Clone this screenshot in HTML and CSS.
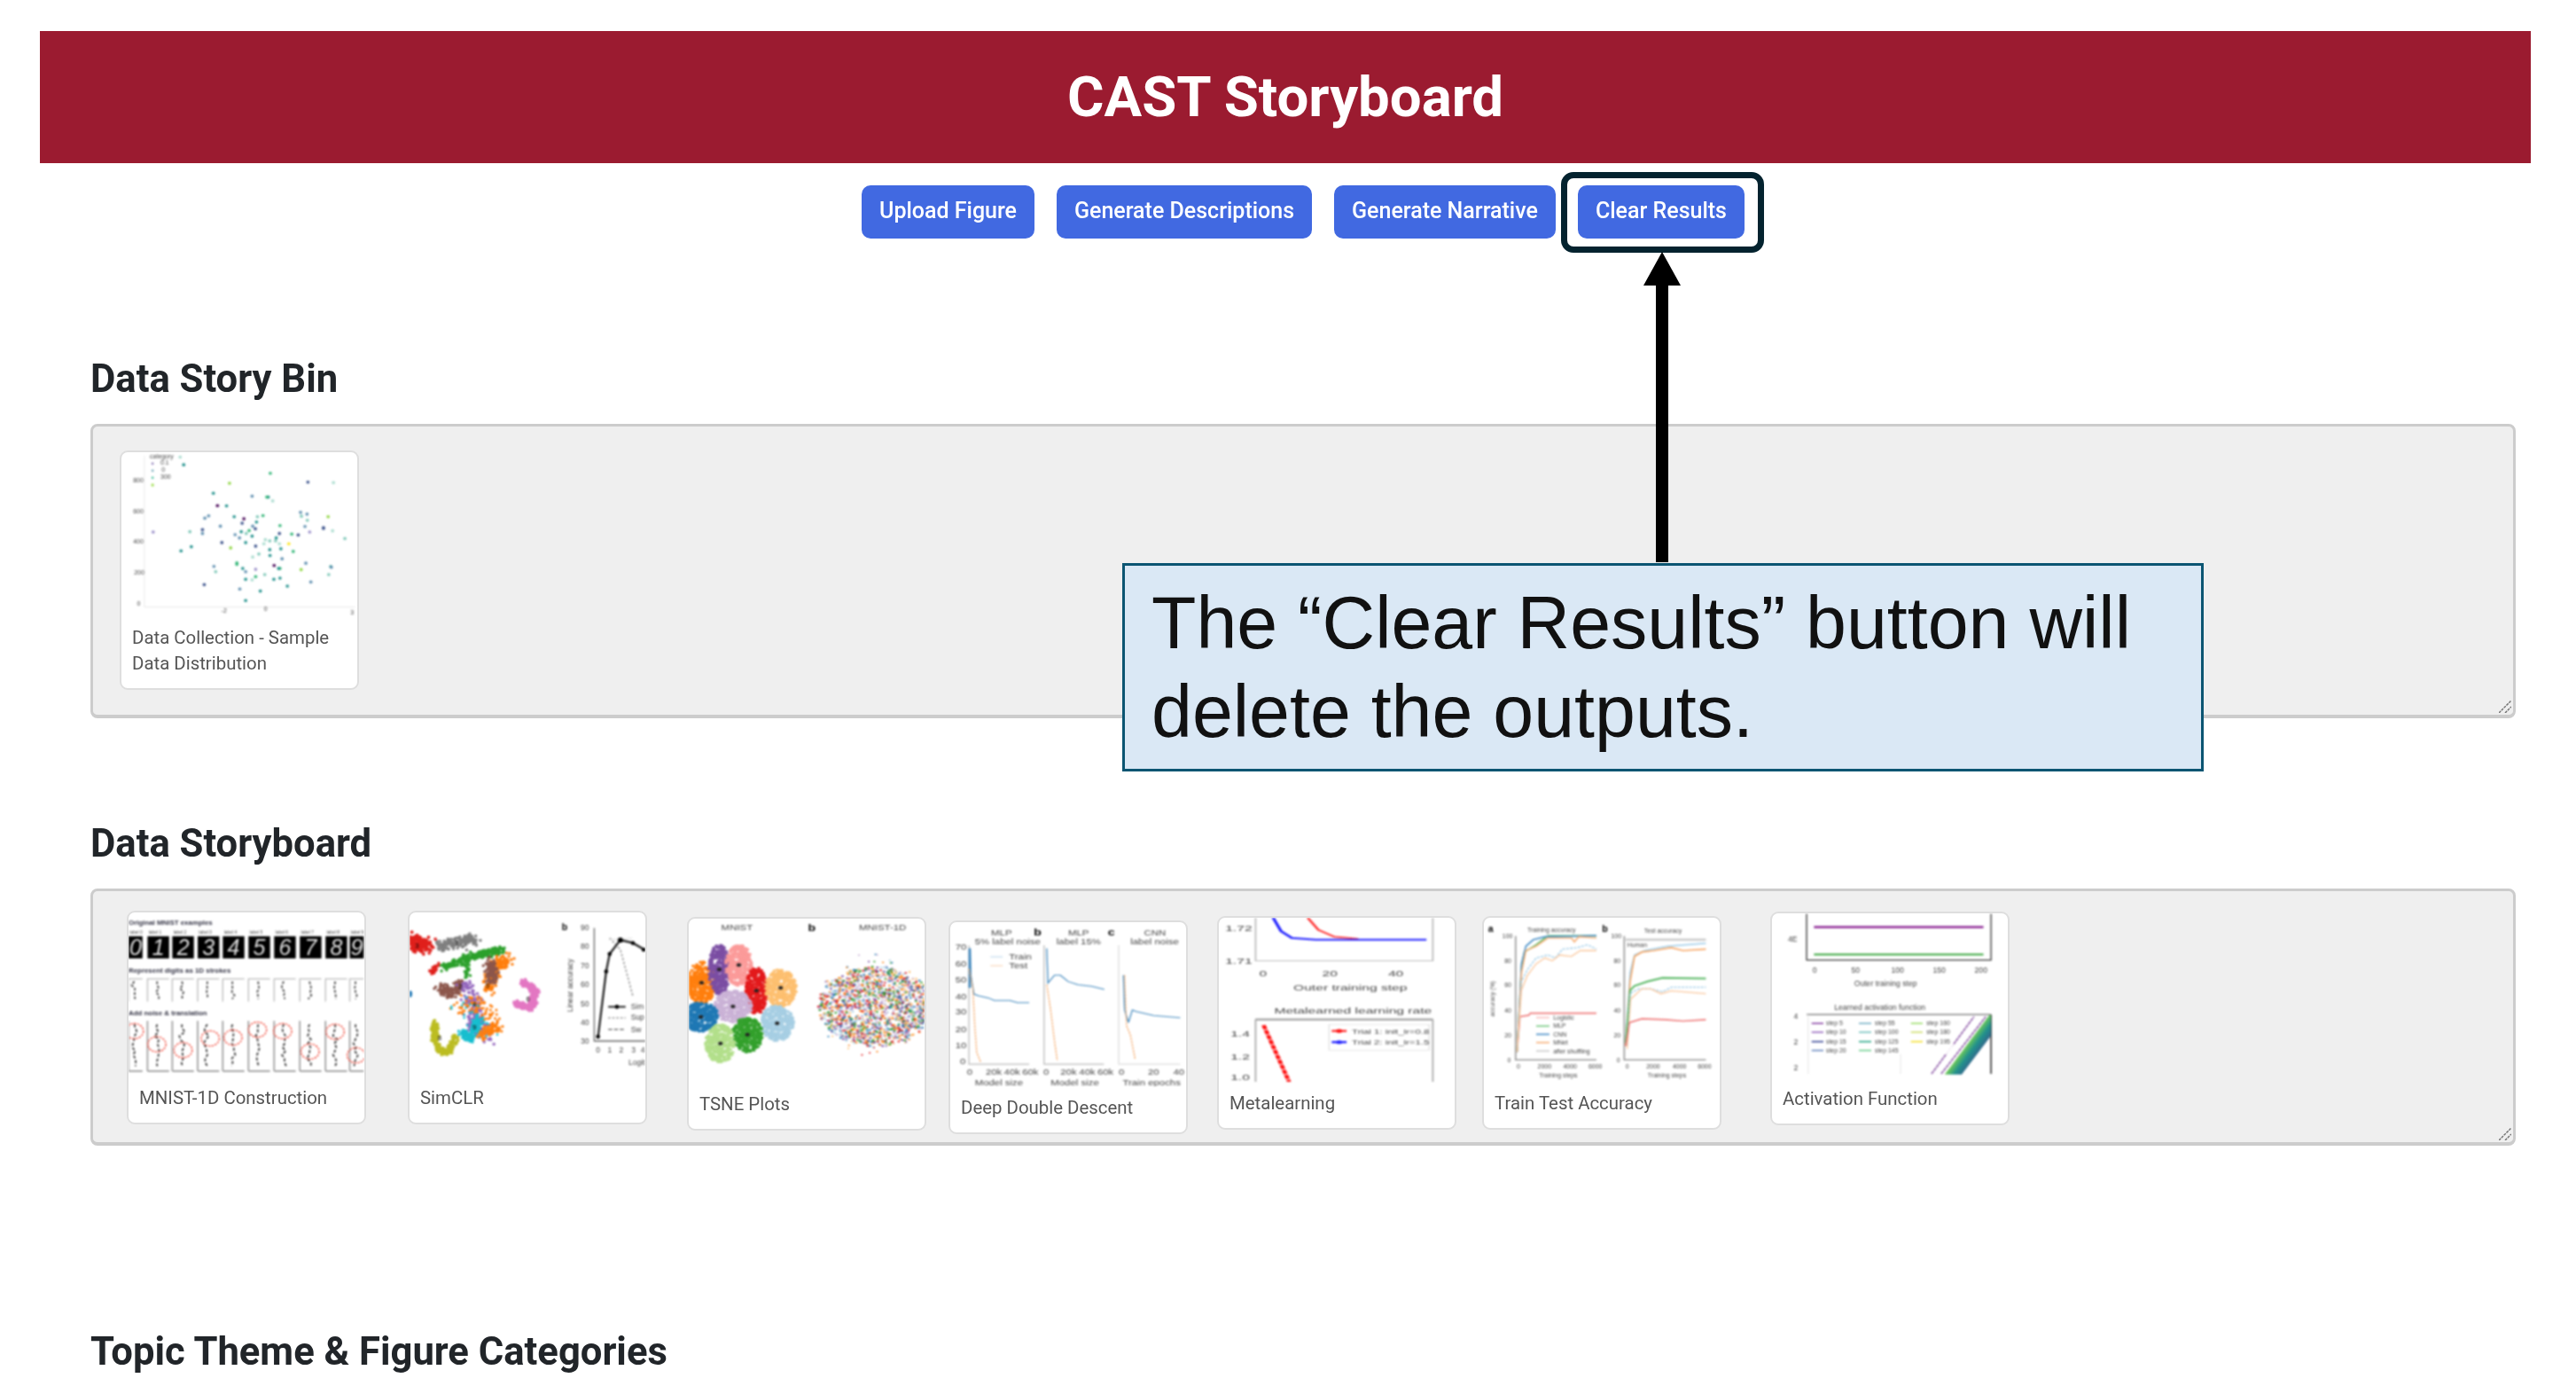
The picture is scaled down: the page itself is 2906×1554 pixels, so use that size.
FILE: index.html
```html
<!DOCTYPE html>
<html lang="en">
<head>
  <meta charset="UTF-8">
  <title>CAST Storyboard</title>
  <link rel="stylesheet" href="styles.css">
</head>
<body>
  <div class="page">
    <header class="banner"><h1>CAST Storyboard</h1></header>

    <div class="toolbar">
      <button class="btn">Upload Figure</button>
      <button class="btn">Generate Descriptions</button>
      <button class="btn">Generate Narrative</button>
      <button class="btn">Clear Results</button>
    </div>

    <h2 class="section-title title-bin">Data Story Bin</h2>
    <div class="panel panel-bin">
      <div class="card">
        <svg class="chart" viewBox="165 90 803 555">
          <g id="scatter"></g>
          <path d="M243 100V615H960" fill="none" stroke="#e8e8e8" stroke-width="3"/>
          <g class="tick">
            <text x="205" y="190">800</text><text x="205" y="296">600</text><text x="205" y="400">400</text>
            <text x="208" y="505">200</text><text x="218" y="610">0</text>
            <text x="505" y="635">-2</text><text x="650" y="630">0</text><text x="945" y="640">3</text>
            <text x="262" y="108">category</text><text x="298" y="130">0.1</text><text x="302" y="156">0</text><text x="298" y="180">300</text>
          </g>
          <g fill="#8fa">
            <circle cx="271" cy="127" r="4" fill="#8d7db8"/><circle cx="271" cy="151" r="4" fill="#6fa6b8"/>
            <circle cx="271" cy="175" r="4" fill="#3fbf9a"/><circle cx="271" cy="200" r="5" fill="#a6e05a"/>
          </g>
        </svg>
        <p class="caption">Data Collection - Sample Data Distribution</p>
      </div>
      <svg class="grip" viewBox="0 0 14 14"><path d="M0 14L14 0M7 14L14 7" stroke="#777" stroke-width="1.5" stroke-dasharray="3 1"/></svg>
    </div>

    <h2 class="section-title title-board">Data Storyboard</h2>
    <div class="panel panel-board">
      <div class="card">
        <svg class="chart" id="mnist" viewBox="10 12 808 555">
          <text class="label" x="10" y="52">Original MNIST examples</text>
          <text class="label" x="10" y="215">Represent digits as 1D strokes</text>
          <text class="label" x="10" y="360">Add noise &amp; translation</text>
        </svg>
        <p class="caption">MNIST-1D Construction</p>
      </div>

      <div class="card jog-2">
        <svg class="chart" viewBox="15 12 813 555">
          <g id="simclr"></g>
          <path d="M652 60V450H828" fill="none" stroke="#666" stroke-width="4"/>
          <path d="M705 95L742 135L765 220L785 295" fill="none" stroke="#999" stroke-width="5" stroke-dasharray="8 6"/>
          <path d="M705 100L742 100L785 95" fill="none" stroke="#ccc" stroke-width="4" stroke-dasharray="5 5"/>
          <path d="M665 435L693 210L705 150L742 102L785 112L825 135" fill="none" stroke="#222" stroke-width="7"/>
          <circle cx="665" cy="435" r="7"/><circle cx="693" cy="210" r="7"/><circle cx="705" cy="150" r="7"/>
          <circle cx="742" cy="102" r="9"/><circle cx="785" cy="112" r="7"/><circle cx="822" cy="135" r="7"/>
          <path d="M700 332H760" stroke="#222" stroke-width="6"/><circle cx="730" cy="332" r="7"/>
          <path d="M700 370H760" stroke="#aaa" stroke-width="5" stroke-dasharray="8 6"/>
          <path d="M700 410H760" stroke="#888" stroke-width="5" stroke-dasharray="14 6"/>
          <g class="tick big">
            <text x="605" y="68">90</text><text x="605" y="133">80</text><text x="605" y="198">70</text>
            <text x="605" y="265">60</text><text x="605" y="330">50</text><text x="605" y="396">40</text><text x="605" y="460">30</text>
            <text x="658" y="490">0</text><text x="698" y="490">1</text><text x="738" y="490">2</text><text x="780" y="490">3</text><text x="812" y="490">4</text>
            <text x="770" y="532">Logit</text><text x="778" y="340">Sim</text><text x="778" y="378">Sup</text><text x="778" y="418">Sw</text>
            <text x="578" y="350" transform="rotate(-90 578 350)">Linear accuracy</text>
          </g>
          <text class="letter" x="540" y="68">b</text>
        </svg>
        <p class="caption">SimCLR</p>
      </div>

      <div class="card jog-3">
        <svg class="chart" viewBox="57 108 603 555" preserveAspectRatio="none">
          <g id="tsne"></g>
          <g class="tick big">
            <text x="140" y="148">MNIST</text><text x="492" y="148">MNIST-1D</text>
          </g>
          <text class="letter" x="362" y="150">b</text>
        </svg>
        <p class="caption">TSNE Plots</p>
      </div>

      <div class="card jog-4">
        <svg class="chart" viewBox="717 122 606 520" preserveAspectRatio="none">
          <path d="M765 195V572H920M958 195V572H1112" fill="none" stroke="#bbb" stroke-width="3"/>
          <path d="M1150 195V572H1308" fill="none" stroke="#ddd" stroke-width="3"/>
          <g fill="none" stroke-width="3">
            <path d="M768 205L770 290L778 350L790 355L815 362L830 370L870 370L890 377L920 377" stroke="#3f87bd"/>
            <path d="M767 205V330" stroke="#3f87bd" stroke-width="6"/>
            <path d="M965 205L968 315L985 290L1000 290L1020 310L1045 320L1080 325L1113 335" stroke="#3f87bd"/>
            <path d="M1162 290L1165 400L1175 440L1185 400L1195 405L1240 418L1308 425" stroke="#3f87bd"/>
            <path d="M765 270L775 330L780 450L785 535L795 565" stroke="#f5a868" stroke-dasharray="7 3"/>
            <path d="M965 320L975 400L985 500L992 560" stroke="#f5a868" stroke-dasharray="7 3"/>
            <path d="M1165 290L1170 450L1180 480L1192 555" stroke="#f5a868" stroke-dasharray="7 3"/>
            <path d="M820 232H852" stroke="#d5e6f3" stroke-width="5"/>
            <path d="M820 260H852" stroke="#fbdcc2" stroke-width="4"/>
          </g>
          <g class="tick big">
            <text x="822" y="165">MLP</text><text x="780" y="192">5% label noise</text>
            <text x="1020" y="165">MLP</text><text x="990" y="192">label 15%</text>
            <text x="1215" y="165">CNN</text><text x="1180" y="192">label noise</text>
            <text x="868" y="240">Train</text><text x="868" y="268">Test</text>
            <text x="730" y="208">70</text><text x="730" y="262">60</text><text x="730" y="312">50</text><text x="730" y="366">40</text>
            <text x="730" y="414">30</text><text x="730" y="470">20</text><text x="730" y="520">10</text><text x="742" y="572">0</text>
            <text x="760" y="606">0</text><text x="808" y="606">20k</text><text x="855" y="606">40k</text><text x="902" y="606">60k</text>
            <text x="956" y="606">0</text><text x="1000" y="606">20k</text><text x="1048" y="606">40k</text><text x="1095" y="606">60k</text>
            <text x="1150" y="606">0</text><text x="1225" y="606">20</text><text x="1290" y="606">40</text>
            <text x="780" y="638">Model size</text><text x="975" y="638">Model size</text><text x="1160" y="638">Train epochs</text>
          </g>
          <text class="letter" x="932" y="165">b</text><text class="letter" x="1122" y="165">c</text>
        </svg>
        <p class="caption">Deep Double Descent</p>
      </div>

      <div class="card jog-5">
        <svg class="chart" viewBox="38 105 443 545" preserveAspectRatio="none">
          <path d="M107 105V248H440V105" fill="none" stroke="#bbb" stroke-width="3"/>
          <path d="M107 650V443H440V650" fill="none" stroke="#aaa" stroke-width="3"/>
          <path d="M107 443H440" stroke="#aaa" stroke-width="8"/>
          <path d="M205 105L225 145L255 168L300 175" fill="none" stroke="#f33" stroke-width="5"/>
          <path d="M140 105L155 150L175 172L220 178H428" fill="none" stroke="#22f" stroke-width="6"/>
          <path d="M122 462L170 650" stroke="#f11" stroke-width="8" stroke-dasharray="14 3"/>
          <rect x="245" y="460" width="188" height="85" fill="#fff" stroke="#ddd" stroke-width="2"/>
          <path d="M250 481H278" stroke="#f11" stroke-width="6"/><circle cx="264" cy="481" r="6" fill="#f11"/>
          <path d="M250 518H278" stroke="#22f" stroke-width="7"/><circle cx="264" cy="518" r="6" fill="#22f"/>
          <g class="tick big">
            <text x="50" y="148">1.72</text><text x="50" y="258">1.71</text>
            <text x="114" y="300">0</text><text x="232" y="300">20</text><text x="356" y="300">40</text>
            <text x="178" y="348">Outer training step</text><text x="142" y="424">Metalearned learning rate</text>
            <text x="60" y="500">1.4</text><text x="60" y="577">1.2</text><text x="60" y="645">1.0</text>
            <text x="288" y="490" class="small">Trial 1: init_lr=0.8</text><text x="288" y="527" class="small">Trial 2: init_lr=1.5</text>
          </g>
        </svg>
        <p class="caption">Metalearning</p>
      </div>

      <div class="card jog-6">
        <svg class="chart" viewBox="22 15 803 555">
          <path d="M130 75V497H405M500 75V497H778" fill="none" stroke="#999" stroke-width="5"/>
          <path d="M505 88H778" stroke="#ccc" stroke-width="7"/>
          <g fill="none" stroke-width="5">
            <path d="M135 470L145 350L175 345L180 338H405" stroke="#ef7b7b"/>
            <path d="M135 470L150 180L160 130L200 105L240 75H405" stroke="#58b864"/>
            <path d="M135 470L150 170L165 110L190 88L230 78L405 74" stroke="#4a90c8"/>
            <path d="M135 470L150 200L165 125L200 110L240 82H320L330 95L345 78L405 82" stroke="#f8b27a"/>
            <path d="M135 470L150 230L170 190L200 150L240 140L265 150L290 120L340 115L375 105L405 120" stroke="#9ccbe8" stroke-dasharray="9 4" stroke-width="4"/>
            <path d="M135 470L150 260L170 210L200 170L230 150L255 160L280 140L320 145L350 125L405 125" stroke="#fbc79c" stroke-width="4"/>
            <path d="M505 440L520 200L535 140L570 125L650 110L778 100" stroke="#9ccbe8"/>
            <path d="M505 450L520 230L535 145L560 130L600 125L660 115L700 125L778 120" stroke="#f8a765"/>
            <path d="M505 440L520 260L535 245L580 230L630 218L778 220" stroke="#58b864" stroke-width="6"/>
            <path d="M510 450L520 270L550 255L590 255L630 265L660 250L778 250" stroke="#9ccbe8" stroke-dasharray="9 4" stroke-width="4"/>
            <path d="M510 460L522 290L560 255L590 255L625 272L660 262L778 272" stroke="#fbc79c" stroke-width="4"/>
            <path d="M505 450L518 370L560 357L640 360L700 365L778 360" stroke="#ef7b7b"/>
            <path d="M200 353H245" stroke="#f9c2c2"/><path d="M200 382H245" stroke="#7ccc86"/>
            <path d="M200 410H245" stroke="#4a90c8"/><path d="M200 438H245" stroke="#f8b27a"/>
            <path d="M200 467H245" stroke="#ccc"/>
          </g>
          <g class="tick">
            <text x="170" y="62">Training accuracy</text><text x="568" y="64">Test accuracy</text>
            <text x="85" y="82">100</text><text x="92" y="167">80</text><text x="92" y="250">60</text><text x="92" y="337">40</text><text x="92" y="422">20</text><text x="102" y="504">0</text>
            <text x="455" y="82">100</text><text x="464" y="167">80</text><text x="464" y="250">60</text><text x="464" y="337">40</text><text x="464" y="422">20</text><text x="474" y="504">0</text>
            <text x="134" y="525">0</text><text x="205" y="525">2000</text><text x="292" y="525">4000</text><text x="378" y="525">6000</text>
            <text x="504" y="525">0</text><text x="575" y="525">2000</text><text x="665" y="525">4000</text><text x="750" y="525">6000</text>
            <text x="210" y="556">Training steps</text><text x="580" y="556">Training steps</text>
            <text x="258" y="360">Logistic</text><text x="258" y="389">MLP</text><text x="258" y="417">CNN</text><text x="258" y="445">MNet</text><text x="258" y="474">after shuffling</text>
            <text x="510" y="112">Human</text>
            <text x="58" y="350" transform="rotate(-90 58 350)">accuracy (%)</text>
          </g>
          <text class="letter" x="36" y="62">a</text><text class="letter" x="424" y="62">b</text>
        </svg>
        <p class="caption">Train Test Accuracy</p>
      </div>

      <div class="card jog-7">
        <svg class="chart" id="activation" viewBox="22 15 803 555">
          <defs>
            <linearGradient id="sweep" gradientUnits="userSpaceOnUse" x1="640" y1="470" x2="715" y2="525">
              <stop offset="0" stop-color="#fde725"/><stop offset=".3" stop-color="#7ad151"/>
              <stop offset=".6" stop-color="#21918c"/><stop offset="1" stop-color="#3b528b"/>
            </linearGradient>
          </defs>
          <path d="M140 15V172H768V15" fill="none" stroke="#333" stroke-width="4"/>
          <path d="M165 60H742" stroke="#8e2a96" stroke-width="8"/>
          <path d="M165 153H742" stroke="#4caf50" stroke-width="7"/>
          <path d="M140 358H768" stroke="#999" stroke-width="5"/>
          <path d="M768 358V560" stroke="#333" stroke-width="5"/>
          <path d="M145 358V560M460 490V560" stroke="#e4e4e4" stroke-width="3"/>
          <path d="M565 560L710 365" stroke="#8e5aa8" stroke-width="5" stroke-dasharray="12 2"/>
          <path d="M598 560L750 365" stroke="#8e5aa8" stroke-width="5" stroke-dasharray="12 2"/>
          <polygon points="610,562 762,360 768,360 768,430 668,562" fill="url(#sweep)"/>
          <rect x="150" y="375" width="490" height="118" fill="#fff" opacity=".9"/>
          <g stroke-width="5">
            <path d="M157 388H197" stroke="#8e4ba8"/><path d="M157 418H197" stroke="#9a6cc0"/><path d="M157 450H197" stroke="#3c4a98"/><path d="M157 480H197" stroke="#6a8ac0"/>
            <path d="M318 388H360" stroke="#7cb4c8"/><path d="M318 418H360" stroke="#78c4c0"/><path d="M318 450H360" stroke="#2aa888"/><path d="M318 480H360" stroke="#6fd090"/>
            <path d="M495 388H535" stroke="#a0e070"/><path d="M495 418H535" stroke="#d0e070"/><path d="M495 450H535" stroke="#f5e030"/>
          </g>
          <g class="tick">
            <text x="206" y="395">step 5</text><text x="206" y="425">step 10</text><text x="206" y="457">step 15</text><text x="206" y="487">step 20</text>
            <text x="372" y="395">step 55</text><text x="372" y="425">step 100</text><text x="372" y="457">step 125</text><text x="372" y="487">step 145</text>
            <text x="548" y="395">step 160</text><text x="548" y="425">step 180</text><text x="548" y="457">step 195</text>
          </g>
          <g class="tick big">
            <text x="76" y="110">4E</text>
            <text x="160" y="216">0</text><text x="292" y="216">50</text><text x="428" y="216">100</text><text x="570" y="216">150</text><text x="712" y="216">200</text>
            <text x="302" y="262">Outer training step</text><text x="234" y="342">Learned activation function</text>
            <text x="96" y="372">4</text><text x="96" y="460">2</text><text x="96" y="548">2</text>
          </g>
        </svg>
        <p class="caption">Activation Function</p>
      </div>

      <svg class="grip" viewBox="0 0 14 14"><path d="M0 14L14 0M7 14L14 7" stroke="#777" stroke-width="1.5" stroke-dasharray="3 1"/></svg>
    </div>

    <h2 class="section-title title-topics">Topic Theme &amp; Figure Categories</h2>
  </div>

  <div class="focus-ring"></div>
  <svg class="arrow" viewBox="0 0 42 350">
    <path d="M21 0L42 38H28V350H14V38H0Z"/>
  </svg>
  <div class="callout">The “Clear Results” button will delete the outputs.</div>

  <script src="charts.js"></script>
</body>
</html>
```

FILE: styles.css
```css
html, body {
  margin: 0;
  padding: 0;
  background-color: #fff;
}
body {
  position: relative;
  height: 1554px;
  overflow: hidden;
  font-family: Roboto, "Liberation Sans", sans-serif;
}
.page {
  padding: 35px 51px 0 45px;
  filter: blur(0.5px);
}
.banner {
  background-color: #9b1b30;
  height: 149px;
  display: flex;
  justify-content: center;
  align-items: center;
}
.banner h1 {
  margin: 0;
  color: #fff;
  font-size: 63.5px;
  font-weight: 700;
}
.toolbar {
  display: flex;
  justify-content: center;
  gap: 25px;
  margin-top: 25px;
  padding-left: 40px;
}
.btn {
  height: 60px;
  padding: 0 20px 4px;
  border: none;
  border-radius: 10px;
  background-color: #4169e1;
  color: #fff;
  font-family: inherit;
  font-size: 25px;
  font-weight: 500;
}
.section-title {
  margin: 0 0 25px 57px;
  color: #212529;
  font-size: 43.6px;
  line-height: 50px;
  font-weight: 700;
}
.title-bin { margin-top: 134px; }
.title-board { margin-top: 117px; }
.title-topics { margin-top: 208px; }

.panel {
  position: relative;
  box-sizing: border-box;
  margin: 0 17px 0 57px;
  display: flex;
  align-items: flex-start;
  border: 3px solid #ccc;
  border-bottom-width: 4px;
  border-radius: 8px;
  background-color: #efefef;
}
.panel-bin {
  height: 332px;
  padding: 27px 30px;
}
.panel-board {
  height: 290px;
  padding: 22px 38px;
}
.grip {
  position: absolute;
  right: 2px;
  bottom: 2px;
  width: 14px;
  height: 14px;
}
.card {
  flex: none;
  box-sizing: border-box;
  width: 270px;
  min-height: 239px;
  border: 2px solid #dedede;
  border-radius: 9px;
  background-color: #fff;
  overflow: hidden;
}
.chart {
  display: block;
  width: 100%;
  height: 185px;
  filter: blur(0.9px);
}
.caption {
  margin: 0;
  padding: 10px 12px 13px;
  color: #555;
  font-size: 20.4px;
  line-height: 29px;
}
.jog-2 { margin-left: 47px; }
.jog-3 { margin-left: 45px; margin-top: 7px; }
.jog-4 { margin-left: 25px; margin-top: 11px; }
.jog-5 { margin-left: 33px; margin-top: 6px; }
.jog-6 { margin-left: 29px; margin-top: 6px; }
.jog-7 { margin-left: 55px; margin-top: 1px; }

.tick text, .label, .letter {
  font-family: "Liberation Sans", sans-serif;
}
.tick text {
  font-size: 21px;
  fill: #444;
}
.tick.big text { font-size: 26px; }
.tick.big .small { font-size: 19px; }
.label {
  font-size: 24px;
  font-weight: 700;
  fill: #334;
}
.letter {
  font-size: 32px;
  font-weight: 700;
}

.focus-ring {
  position: absolute;
  left: 1761px;
  top: 194px;
  box-sizing: border-box;
  width: 229px;
  height: 91px;
  border: 7px solid #04232f;
  border-radius: 14px;
}
.arrow {
  position: absolute;
  left: 1854px;
  top: 283px;
  width: 42px;
  height: 352px;
}
.callout {
  position: absolute;
  left: 1266px;
  top: 635px;
  box-sizing: border-box;
  width: 1220px;
  height: 235px;
  padding: 14px 30px;
  border: 3px solid #0b5572;
  background-color: #dae8f5;
  color: #111;
  font-family: "Liberation Sans", Arial, sans-serif;
  font-size: 82.5px;
  line-height: 100px;
}
```

FILE: charts.js
```js
// seeded so every load draws the same figures
var seed = 12345;
function rnd() {
  seed = (seed * 1664525 + 1013904223) % 4294967296;
  return seed / 4294967296;
}
function gauss() {
  return (rnd() + rnd() + rnd() - 1.5) / 1.5;
}
function add(parent, tag, attrs) {
  var el = document.createElementNS("http://www.w3.org/2000/svg", tag);
  for (var k in attrs) el.setAttribute(k, attrs[k]);
  parent.appendChild(el);
  return el;
}

// Data Story Bin scatter
var V = ["#440154", "#3b528b", "#5f8fb0", "#21918c", "#35b779", "#7fc8b8", "#a9dccf", "#90d743", "#fde725", "#9a8fc9"];
var points = [
  [365,105,6],[377,131,3],[672,160,4],[533,194,7],[800,190,1],[887,192,6],[478,228,3],[610,238,2],[665,241,3],[680,254,6],
  [492,270,0],[523,271,3],[775,293,2],[797,299,2],[778,306,5],[798,320,5],[869,308,7],[647,304,4],[628,308,5],[549,308,3],
  [582,315,0],[462,305,2],[449,313,2],[576,330,1],[625,326,3],[502,340,2],[612,340,2],[705,338,4],[790,341,2],[853,348,1],
  [621,349,1],[441,352,1],[441,365,2],[273,360,9],[398,359,5],[600,355,4],[573,359,3],[590,365,5],[610,374,3],[552,369,2],
  [567,380,2],[703,365,1],[692,380,3],[745,367,4],[767,370,1],[806,360,9],[884,356,6],[926,382,5],[655,386,6],[670,390,5],
  [690,390,5],[507,396,1],[588,396,3],[403,410,3],[368,424,3],[622,408,1],[650,400,6],[703,400,6],[735,400,8],[537,414,7],
  [670,420,3],[708,417,3],[750,426,4],[633,435,5],[671,440,3],[612,445,6],[712,451,2],[558,465,4],[793,466,2],[685,474,0],
  [480,477,2],[578,484,3],[588,495,2],[622,487,9],[705,484,4],[777,488,7],[878,478,3],[486,495,5],[653,505,5],[622,512,4],
  [871,505,5],[588,521,3],[610,523,6],[684,521,3],[705,517,3],[810,530,2],[447,539,1],[730,544,3],[568,554,2],[638,561,3],
  [588,593,3],[558,470,4],[700,484,3],[880,480,2],[853,345,1],[660,241,4]
];
var scatter = document.getElementById("scatter");
points.forEach(function(p) {
  add(scatter, "circle", { cx: p[0], cy: p[1], r: 5.5, fill: V[p[2]] });
});

// MNIST-1D construction figure
var mnist = document.getElementById("mnist");
var boxX = [10, 75, 160, 247, 333, 421, 509, 597, 685, 768];
var rings = [[30,415],[107,460],[197,480],[290,440],[368,437],[452,410],[538,415],[632,485],[718,417],[790,498]];
function squiggle(x, top, bottom, step, width) {
  var d = "M" + x + " " + top;
  for (var y = top + step; y < bottom; y += step) {
    d += "L" + (x + gauss() * width) + " " + y;
  }
  return d;
}
boxX.forEach(function(x, i) {
  var w = (i === 0 || i === 9) ? 48 : 74;
  add(mnist, "rect", { x: x, y: 90, width: w, height: 76, fill: "#000" });
  var digit = add(mnist, "text", { x: x + w / 2 - 21, y: 155, fill: "#ddd", "font-size": 76, "font-style": "italic", "font-family": "Liberation Sans, sans-serif" });
  digit.textContent = i;
  var tag = add(mnist, "text", { x: x + 4, y: 82, fill: "#444", "font-size": 15, "font-family": "Liberation Sans, sans-serif" });
  tag.textContent = "label " + i;

  add(mnist, "path", { d: "M" + x + " 314V236H" + (x + w), fill: "none", stroke: "#bbb", "stroke-width": 4 });
  add(mnist, "path", { d: squiggle(x + w / 2 - 4, 245, 308, 12, 16), fill: "none", stroke: "#333", "stroke-width": 5, "stroke-dasharray": "9 6" });

  add(mnist, "path", { d: "M" + x + " 552V380M" + x + " 552H" + (x + w), fill: "none", stroke: "#999", "stroke-width": 5 });
  add(mnist, "path", { d: squiggle(x + w / 2 - 4, 392, 538, 13, 16), fill: "none", stroke: "#222", "stroke-width": 5, "stroke-dasharray": "10 7" });
  add(mnist, "ellipse", { cx: rings[i][0], cy: rings[i][1], rx: 31, ry: 26, fill: "none", stroke: "#f04030", "stroke-width": 4, "stroke-dasharray": "7 4" });
});

// sample dots around a polyline
function along(parent, color, count, spread, r, line) {
  for (var i = 0; i < count; i++) {
    var t = rnd() * (line.length - 1);
    var a = Math.floor(t);
    var b = Math.min(a + 1, line.length - 1);
    var f = t - a;
    add(parent, "circle", {
      cx: line[a][0] + (line[b][0] - line[a][0]) * f + gauss() * spread * 1.5,
      cy: line[a][1] + (line[b][1] - line[a][1]) * f + gauss() * spread * 1.5,
      r: r * 1.15,
      fill: color
    });
  }
}

var simclr = document.getElementById("simclr");
along(simclr, "#7f7f7f", 160, 20, 4.5, [[110,125],[180,110],[245,100]]);
along(simclr, "#e0201c", 170, 24, 5, [[25,100],[45,120],[85,118]]);
along(simclr, "#e0201c", 30, 13, 4.5, [[92,210],[112,190]]);
along(simclr, "#2ca02c", 240, 14, 4.5, [[130,195],[215,165],[280,145],[340,135]]);
along(simclr, "#2ca02c", 35, 10, 4.5, [[215,170],[212,225]]);
along(simclr, "#ff7f0e", 170, 24, 4.5, [[350,170],[310,200],[285,270]]);
along(simclr, "#8c564b", 120, 20, 4.5, [[295,180],[300,240]]);
along(simclr, "#8c564b", 130, 18, 4.5, [[120,260],[160,290],[195,250]]);
along(simclr, "#9467bd", 200, 30, 4.5, [[200,260],[240,320],[235,400],[300,420]]);
along(simclr, "#ff7f0e", 80, 36, 4, [[170,340],[260,320],[310,400]]);
along(simclr, "#17becf", 170, 17, 4.5, [[200,420],[225,440],[255,370]]);
along(simclr, "#17becf", 30, 40, 3.5, [[180,300],[280,420]]);
along(simclr, "#ff7f0e", 70, 16, 4.5, [[265,430],[320,400]]);
along(simclr, "#bcbd22", 220, 11, 5, [[105,385],[100,430],[115,480],[150,490],[175,430]]);
along(simclr, "#e377c2", 240, 12, 5, [[405,245],[450,275],[435,335],[375,320]]);
along(simclr, "#1f77b4", 16, 5, 4, [[18,280],[18,300]]);
[[42,122,"3"],[180,112,"7"],[192,262,"2"],[240,322,"4"],[120,440,"8"],[240,402,"9"],[425,305,"6"],[285,258,"5"]].forEach(function(m) {
  var t = add(simclr, "text", { x: m[0] - 8, y: m[1] + 8, "font-size": 24, "font-family": "Liberation Sans, sans-serif" });
  t.textContent = m[2];
});

// t-SNE blobs: cx, cy, rx, ry, colour
function ellipseDots(parent, color, count, cx, cy, rx, ry, r) {
  for (var i = 0; i < count; i++) {
    var a = rnd() * Math.PI * 2;
    var d = Math.sqrt(rnd());
    add(parent, "circle", { cx: cx + Math.cos(a) * d * rx, cy: cy + Math.sin(a) * d * ry, r: r, fill: color });
  }
}
var tsne = document.getElementById("tsne");
var blobs = [
  ["#ff7f0e", 90, 325, 36, 72], ["#7b4ea3", 135, 280, 27, 85], ["#fb9a99", 185, 265, 34, 70], ["#e31a1c", 230, 352, 27, 80],
  ["#fdbf6f", 292, 342, 40, 65], ["#cab2d6", 170, 405, 48, 55], ["#1f78b4", 88, 440, 45, 50], ["#a6cee3", 283, 462, 42, 60],
  ["#33a02c", 207, 500, 38, 60], ["#b2df8a", 138, 530, 38, 65]
];
blobs.forEach(function(b) {
  ellipseDots(tsne, b[0], 340, b[1], b[2], b[3], b[4], 4.5);
  add(tsne, "circle", { cx: b[1], cy: b[2], r: 6, fill: "#222" });
});
var mixed = ["#1f78b4", "#ff7f0e", "#33a02c", "#e31a1c", "#7b4ea3", "#fdbf6f", "#a6cee3", "#cab2d6"];
for (var i = 0; i < 1500; i++) {
  ellipseDots(tsne, mixed[i % mixed.length], 1, 535, 405, 148, 135, 3.2);
}
for (var j = 0; j < 150; j++) {
  ellipseDots(tsne, mixed[j % mixed.length], 1, 525, 400, 140, 175, 2.6);
}
```
